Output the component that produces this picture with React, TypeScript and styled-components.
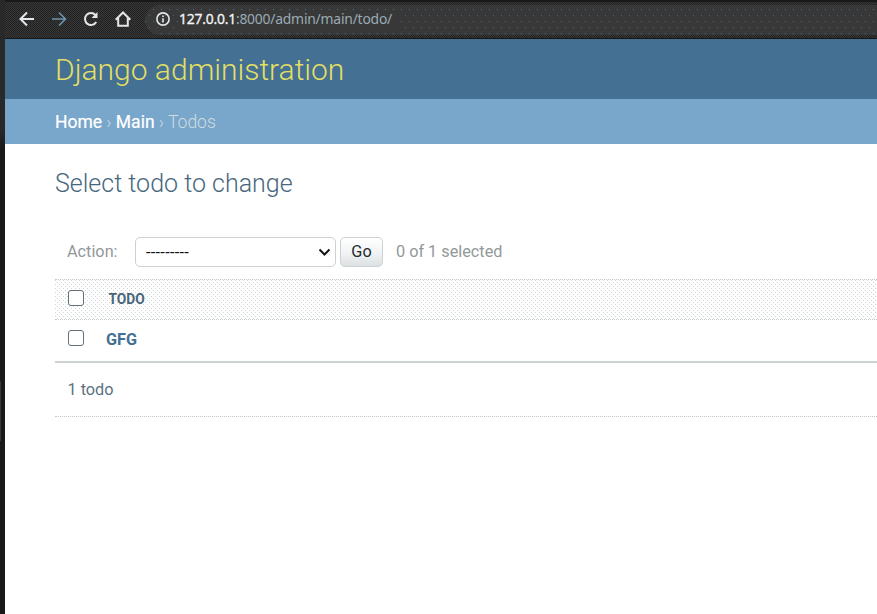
import React from "react";
import styled, { createGlobalStyle, css } from "styled-components";

const GlobalStyle = createGlobalStyle`
  * { box-sizing: border-box; }
  html, body { margin: 0; padding: 0; background: #fff; overflow: hidden; }
  h1, h2 { margin: 0; font-weight: 300; }
`;

const Desktop = styled.div`
  width: 877px;
  height: 614px;
  display: flex;
  background: #fff;
  overflow: hidden;
  font-family: Roboto, sans-serif;
`;

const WindowEdge = styled.div`
  flex: 0 0 5px;
  display: flex;
  flex-direction: column;
  background: linear-gradient(#292929 0 130px, #191919 150px);
`;

const EdgeHandle = styled.div`
  width: 1px;
  height: 60px;
  margin-top: 381px;
  background: #383838;
`;

const BrowserWindow = styled.main`
  flex: 1;
  min-width: 0;
`;

const BrowserBar = styled.header`
  height: 39px;
  display: flex;
  align-items: center;
  padding-left: 14px;
  border-top: 2px solid #191919;
  border-bottom: 1px solid #191919;
  background: conic-gradient(#212121 25%, #383838 0 50%, #212121 0 75%, #383838 0) 0 0 / 2px 2px;
`;

const NavIcon = styled.svg<{ $muted?: boolean }>`
  flex: none;
  width: 16px;
  height: 16px;
  margin: 0 16px 2px 0;
  fill: none;
  stroke: ${(p) => (p.$muted ? "#6c94b0" : "#e4e7e9")};
  stroke-width: ${(p) => (p.$muted ? 1.6 : 2)};
`;

const AddressField = styled.div`
  flex: 1;
  height: 30px;
  display: flex;
  align-items: center;
  padding: 0 0 2px 11px;
  margin-left: -2px;
  border-radius: 16px 0 0 16px;
  background:
    conic-gradient(from 0deg at 1px 1px, transparent 75%, #447093 0) 0 4px / 8px 12px,
    conic-gradient(from 0deg at 1px 1px, transparent 75%, #4d6373 0) 4px 10px / 8px 12px,
    #383838;
`;

const InfoIcon = styled.svg`
  width: 14px;
  height: 14px;
  margin-right: 9px;
  fill: none;
  stroke: #e4e7e9;
  stroke-width: 1.6;
`;

const Address = styled.span`
  padding-right: 8px;
  background: #383838;
  font: 13.9px/18px "Noto Sans", sans-serif;
  letter-spacing: -0.22px;
  color: #9aabb5;
  white-space: nowrap;
`;

const Host = styled.span`
  color: #f2f4f5;
  -webkit-text-stroke: 0.3px #f2f4f5;
`;

const SiteHeader = styled.div`
  height: 60px;
  padding-left: 50px;
  background: #447093;
  color: #e3df64;
`;

const SiteTitle = styled.h1`
  font-size: 30px;
  line-height: 61px;
`;

const Breadcrumbs = styled.nav`
  height: 45px;
  padding-left: 50px;
  background: #79a7cb;
  color: #d0dbe0;
  font-size: 17.5px;
  font-weight: 300;
  line-height: 47px;
  white-space: pre;
`;

const Crumb = styled.span`
  color: #fff;
  font-weight: 400;
  -webkit-text-stroke: 0.2px #fff;
`;

const Content = styled.section`
  padding: 25px 0 0 50px;
`;

const PageTitle = styled.h2`
  height: 68px;
  font-size: 25px;
  line-height: 30px;
  color: #48677d;
`;

const Actions = styled.div`
  height: 30px;
  display: flex;
  align-items: center;
  padding-left: 12px;
  font-size: 16.25px;
  color: #92999a;
`;

const ActionLabel = styled.label`
  width: 68px;
  padding-bottom: 2px;
`;

const Counter = styled.span`
  padding-bottom: 2px;
`;

const SelectBox = styled.div`
  width: 201px;
  height: 30px;
  display: flex;
  align-items: center;
  justify-content: space-between;
  padding: 0 4px 0 10px;
  margin-right: 4px;
  border: 1px solid #ccd2d4;
  border-radius: 5px;
  color: #111;
  font-size: 16.25px;
  letter-spacing: 0.3px;
`;

const Chevron = styled.svg`
  width: 13px;
  height: 10px;
  fill: none;
  stroke: #151515;
  stroke-width: 2;
`;

const GoButton = styled.button`
  width: 43px;
  height: 30px;
  padding: 0 0 2px;
  margin-right: 13px;
  border: 1px solid #ccd2d4;
  border-radius: 5px;
  background: linear-gradient(#fff, #f2f4f5 50%, #dde1e3);
  color: #222b30;
  font: 16.25px Roboto, sans-serif;
`;

const stipple = css`
  background:
    conic-gradient(from 0deg at 1px 1px, transparent 75%, #ccd4d6 0) 0 0 / 4px 4px,
    conic-gradient(from 0deg at 1px 1px, transparent 75%, #ccd4d6 0) 2px 2px / 4px 4px,
    #fff;
`;

const Results = styled.div`
  margin-top: 12px;
`;

const Row = styled.div<{ $head?: boolean }>`
  height: 41px;
  display: flex;
  align-items: center;
  padding: 0 0 ${(p) => (p.$head ? 4 : 5)}px 13px;
  color: #447093;
  font-weight: 700;
  font-size: ${(p) => (p.$head ? 13.75 : 16.25)}px;
  ${(p) => p.$head && stipple}
  ${(p) => p.$head && "border-top: 1px dotted #bfc8cb; border-bottom: 1px dotted #bfc8cb; color: #496779;"}
`;

const Checkbox = styled.span`
  width: 16px;
  height: 16px;
  border: 1px solid #62717b;
  border-radius: 3px;
  background: #fff;
`;

const Cell = styled.span<{ $head?: boolean }>`
  padding: 3px 0 0 ${(p) => (p.$head ? 24.5 : 22)}px;
`;

const Summary = styled.div`
  height: 56px;
  padding-left: 12.5px;
  border-top: 2px solid #ccd2d4;
  border-bottom: 1px dotted #bfc8cb;
  color: #5c717e;
  font-size: 16.25px;
  line-height: 53px;
`;

export default function App() {
  return (
    <>
      <GlobalStyle />
      <Desktop>
        <WindowEdge><EdgeHandle /></WindowEdge>
        <BrowserWindow>
          <BrowserBar>
            <NavIcon viewBox="0 0 16 16"><path d="M15 8H2M8 1.5 1.5 8 8 14.5" /></NavIcon>
            <NavIcon viewBox="0 0 16 16" $muted><path d="M1 8h13M8 1.5 14.5 8 8 14.5" /></NavIcon>
            <NavIcon viewBox="0 0 16 16"><path d="M13.2 11A6 6 0 1 1 12.5 4" /><path d="M14.5 1v6h-6z" fill="#e4e7e9" stroke="none" /></NavIcon>
            <NavIcon viewBox="0 0 16 16"><path d="M.7 8.7 8 1.5l7.3 7.2M3.2 7v7.8h9.6V7" /></NavIcon>
            <AddressField>
              <InfoIcon viewBox="0 0 14 14"><circle cx="7" cy="7" r="6.1" /><path d="M7 6.2v4.3M7 3.4v1.6" /></InfoIcon>
              <Address><Host>127.0.0.1</Host>:8000/admin/main/todo/</Address>
            </AddressField>
          </BrowserBar>
          <SiteHeader><SiteTitle>Django administration</SiteTitle></SiteHeader>
          <Breadcrumbs><Crumb>Home</Crumb> › <Crumb>Main</Crumb> › Todos</Breadcrumbs>
          <Content>
            <PageTitle>Select todo to change</PageTitle>
            <Actions>
              <ActionLabel>Action:</ActionLabel>
              <SelectBox>
                <span>---------</span>
                <Chevron viewBox="0 0 13 10"><path d="m1.5 2.5 5 5 5-5" /></Chevron>
              </SelectBox>
              <GoButton type="button">Go</GoButton>
              <Counter>0 of 1 selected</Counter>
            </Actions>
            <Results>
              <Row $head><Checkbox /><Cell $head>TODO</Cell></Row>
              <Row><Checkbox /><Cell>GFG</Cell></Row>
              <Summary>1 todo</Summary>
            </Results>
          </Content>
        </BrowserWindow>
      </Desktop>
    </>
  );
}
